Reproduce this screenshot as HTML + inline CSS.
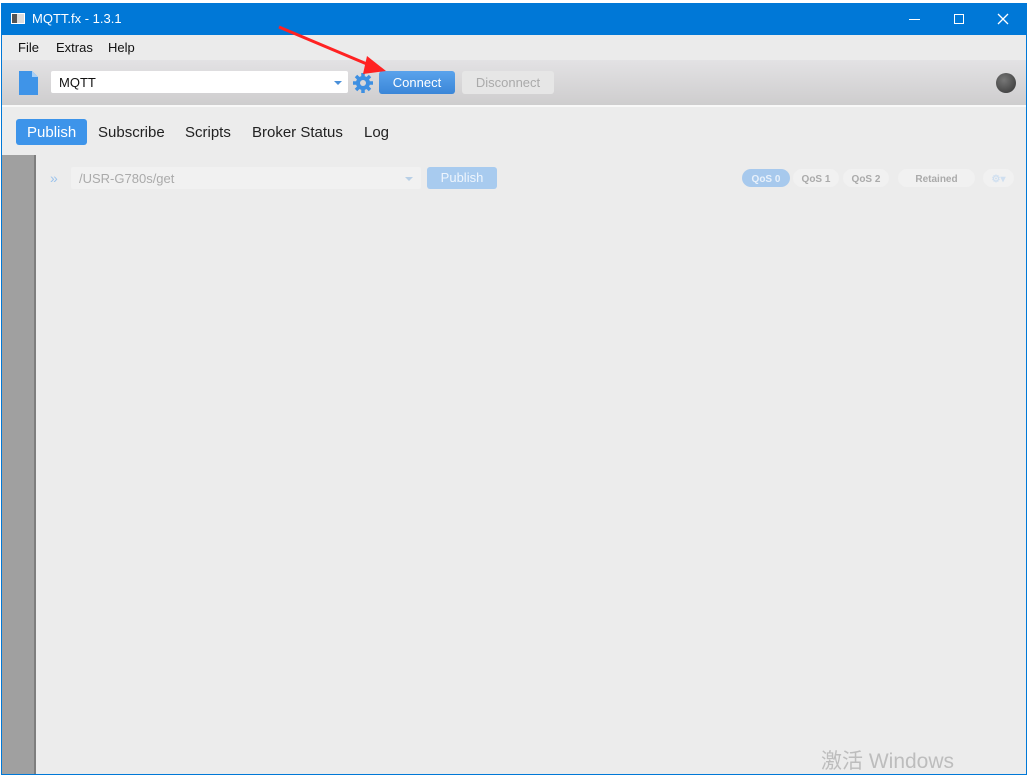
<!DOCTYPE html>
<html><head><style>
*{margin:0;padding:0;box-sizing:border-box}
body{width:1032px;height:778px;background:#fff;position:relative;overflow:hidden;font-family:"Liberation Sans","Noto Sans CJK SC",sans-serif}
.win{position:absolute;left:1px;top:3px;width:1026px;height:772px;border:1px solid #0078d7;background:#ececec}
.title{position:absolute;left:0;top:0;width:1024px;height:31px;background:#0078d7;color:#fff;font-size:13px}
.menu{position:absolute;top:31px;left:0;width:1024px;height:25px;background:#ebebeb;font-size:13px;color:#111}
.menu span{position:absolute;top:5px}
.tool{position:absolute;top:56px;left:0;width:1024px;height:47px;background:linear-gradient(#e3e2e4,#cecdce);border-bottom:2px solid #f8f8f8}
.abs{position:absolute}
.tabs span{position:absolute;top:124px;font-size:15px;color:#222}
.pill{position:absolute;top:169px;height:18px;border-radius:9px;background:#f1f1f1;font-size:10px;font-weight:bold;color:#aaa;text-align:center;line-height:19px;padding-top:1px}
</style></head><body>
<div class="win">
 <div class="title">
  <div class="abs" style="left:9px;top:9px;width:14px;height:11px;background:#ddd;border:1px solid #fff"><div style="width:5px;height:9px;background:#555"></div></div>
  <span class="abs" style="left:30px;top:7px">MQTT.fx - 1.3.1</span>
  <div class="abs" style="left:907px;top:15px;width:11px;height:1px;background:#fff"></div>
  <div class="abs" style="left:952px;top:10px;width:10px;height:10px;border:1px solid #fff"></div>
  <svg class="abs" style="left:995px;top:9px" width="12" height="12"><path d="M1 1L11 11M11 1L1 11" stroke="#fff" stroke-width="1.3"/></svg>
 </div>
 <div class="menu"><span style="left:16px">File</span><span style="left:54px">Extras</span><span style="left:106px">Help</span></div>
 <div class="tool"></div>
</div>
<svg class="abs" style="left:19px;top:71px" width="20" height="24"><path d="M0 0H13L19 6V24H0Z" fill="#3f94e8"/><path d="M13 0V6H19" fill="#a9cff5"/></svg>
<div class="abs" style="left:51px;top:71px;width:297px;height:22px;background:#fff;border-radius:2px;font-size:13px;padding:4px 8px;color:#111">MQTT</div>
<div class="abs" style="left:334px;top:81px;border:4px solid transparent;border-top:4px solid #4a90d9"></div>
<svg class="abs" style="left:353px;top:73px" width="20" height="20" viewBox="0 0 20 20"><g fill="#3d8fe2"><circle cx="10" cy="10" r="7"/><g stroke="#3d8fe2" stroke-width="3.5"><path d="M10 0V20M0 10H20M3 3L17 17M17 3L3 17"/></g></g><circle cx="10" cy="10" r="3" fill="#d8d7d8"/></svg>
<div class="abs" style="left:379px;top:71px;width:76px;height:23px;background:linear-gradient(#5aa3ec,#3a86d8);border-radius:3px;color:#fff;font-size:13px;text-align:center;line-height:23px">Connect</div>
<div class="abs" style="left:462px;top:71px;width:92px;height:23px;background:#e6e6e6;border-radius:3px;color:#aaa;font-size:13px;text-align:center;line-height:23px">Disconnect</div>
<div class="abs" style="left:996px;top:73px;width:20px;height:20px;border-radius:50%;background:radial-gradient(circle at 40% 35%,#777,#333)"></div>
<svg class="abs" style="left:270px;top:20px" width="130" height="60"><path d="M9 7L104 47" stroke="#f22" stroke-width="3"/><path d="M97 36L116 51L93 54Z" fill="#f22"/></svg>
<div class="abs" style="left:16px;top:119px;width:71px;height:26px;background:#3d94ea;border-radius:3px"></div>
<div class="tabs"><span style="left:27px;color:#fff">Publish</span><span style="left:98px">Subscribe</span><span style="left:185px">Scripts</span><span style="left:252px">Broker Status</span><span style="left:364px">Log</span></div>
<div class="abs" style="left:2px;top:155px;width:34px;height:619px;background:#a0a0a0;border-right:2px solid #7e7e7e"></div>
<span class="abs" style="left:50px;top:170px;color:#9cc3ec;font-size:14px">»</span>
<div class="abs" style="left:71px;top:167px;width:350px;height:22px;background:#f1f1f1;border-radius:2px;font-size:13px;color:#aaa;padding:4px 8px">/USR-G780s/get</div>
<div class="abs" style="left:405px;top:177px;border:4px solid transparent;border-top:4px solid #b8cfe6"></div>
<div class="abs" style="left:427px;top:167px;width:70px;height:22px;background:#a8cbef;border-radius:3px;color:#eef5fd;font-size:13px;text-align:center;line-height:22px">Publish</div>
<div class="pill" style="left:742px;width:48px;background:#a7c9ed;color:#e8f1fb">QoS 0</div>
<div class="pill" style="left:793px;width:46px">QoS 1</div>
<div class="pill" style="left:843px;width:46px">QoS 2</div>
<div class="pill" style="left:898px;width:77px">Retained</div>
<div class="pill" style="left:983px;width:31px;color:#cfdff0">⚙▾</div>
<span class="abs" style="left:821px;top:745px;font-size:21px;color:#bdbdbd">激活 Windows</span>
</body></html>
